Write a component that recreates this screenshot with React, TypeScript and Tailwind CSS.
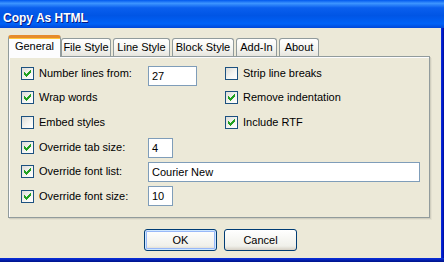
import React from 'react';

const ui = "font-['Liberation_Sans',Arial,sans-serif] text-[11px] text-black";

function Check({ on }: { on: boolean }) {
  return (
    <span className="w-[13px] h-[13px] shrink-0 border border-[#1C5180] bg-[linear-gradient(135deg,#DCDCD7,#F4F4F0_55%,#FFFFFF)] flex items-center justify-center">
      {on && (
        <svg width="7" height="7" viewBox="0 0 7 7" shapeRendering="crispEdges" fill="#21A121">
          <rect x="6" y="0" width="1" height="1" />
          <rect x="5" y="1" width="2" height="1" />
          <rect x="0" y="2" width="1" height="1" />
          <rect x="4" y="2" width="3" height="1" />
          <rect x="0" y="3" width="2" height="1" />
          <rect x="3" y="3" width="3" height="1" />
          <rect x="0" y="4" width="5" height="1" />
          <rect x="1" y="5" width="3" height="1" />
          <rect x="2" y="6" width="1" height="1" />
        </svg>
      )}
    </span>
  );
}

function Option({ on, label, width }: { on: boolean; label: string; width?: string }) {
  return (
    <div className="flex items-start pt-[6px]">
      <Check on={on} />
      <span className={`ml-[5px] leading-[13px] whitespace-nowrap ${width ?? ''}`}>{label}</span>
    </div>
  );
}

function Field({ value, w, mt }: { value: string; w: string; mt: string }) {
  return (
    <div className={`${w} ${mt} h-[20px] border border-[#7F9DB9] bg-white pl-[3px] leading-[18px] whitespace-nowrap`}>
      {value}
    </div>
  );
}

const tabs = [
  { name: 'File Style', w: 'w-[50px]' },
  { name: 'Line Style', w: 'w-[57px]' },
  { name: 'Block Style', w: 'w-[62px]' },
  { name: 'Add-In', w: 'w-[41px]' },
  { name: 'About', w: 'w-[40px]' },
];

export default function App() {
  return (
    <div className={`w-[444px] h-[262px] flex flex-col overflow-hidden ${ui}`}>
      {/* title bar */}
      <div className="h-[28px] shrink-0 bg-[linear-gradient(to_bottom,#0058EE_0%,#3D95FF_12%,#0A5FEE_28%,#0055E5_55%,#0062F7_85%,#0047D8_100%)] pl-[3px] pt-[10px]">
        <span className="text-white font-bold text-[12px] leading-[14px] [text-shadow:1px_1px_0_#0A1883]">Copy As HTML</span>
      </div>

      <div className="flex flex-1">
        <div className="flex-1 bg-[#ECE9D8] flex flex-col pt-[7px]">
          {/* tab strip */}
          <div className="flex items-end h-[21px] ml-[8px] gap-[2px]">
            <div className="relative z-10 w-[53px] h-[22px] -mb-[1px] -mr-[2px] rounded-t-[3px] border-x border-[#919B9C] border-t-[3px] border-t-[#E68B2C] bg-[#FCFCFE] shadow-[inset_0_1px_0_#FFC73C] text-center pt-[2px] leading-[13px]">
              General
            </div>
            {tabs.map(t => (
              <div
                key={t.name}
                className={`${t.w} h-[18px] rounded-t-[3px] border-x border-t border-[#919B9C] bg-[linear-gradient(to_bottom,#FFFFFF,#F4F4F0_60%,#E6E5DE)] text-center pt-[2px] leading-[13px] whitespace-nowrap`}
              >
                {t.name}
              </div>
            ))}
          </div>

          {/* panel */}
          <div className="ml-[8px] w-[422px] h-[162px] border border-[#919B9C] shadow-[1px_1px_0_#D0CEBF,2px_2px_0_#E3E0D0,inset_1px_1px_0_#FCFCFE] pl-[12px] pt-[4px] flex flex-col">
            <div className="h-[24px] flex">
              <div className="w-[204px] flex items-start">
                <Option on label="Number lines from:" width="w-[109px]" />
                <Field value="27" w="w-[49px]" mt="mt-[5px]" />
              </div>
              <Option on={false} label="Strip line breaks" />
            </div>
            <div className="h-[25px] flex">
              <div className="w-[204px]">
                <Option on label="Wrap words" />
              </div>
              <Option on label="Remove indentation" />
            </div>
            <div className="h-[25px] flex">
              <div className="w-[204px]">
                <Option on={false} label="Embed styles" />
              </div>
              <Option on label="Include RTF" />
            </div>
            <div className="h-[24px] flex items-start">
              <Option on label="Override tab size:" width="w-[109px]" />
              <Field value="4" w="w-[25px]" mt="mt-[3px]" />
            </div>
            <div className="h-[25px] flex items-start">
              <Option on label="Override font list:" width="w-[109px]" />
              <Field value="Courier New" w="w-[272px]" mt="mt-[3px]" />
            </div>
            <div className="h-[25px] flex items-start">
              <Option on label="Override font size:" width="w-[109px]" />
              <Field value="10" w="w-[25px]" mt="mt-[2px]" />
            </div>
          </div>

          {/* buttons */}
          <div className="mt-[11px] flex justify-center gap-[7px]">
            <button className="w-[73px] h-[22px] rounded-[3px] border border-[#003C74] bg-[linear-gradient(to_bottom,#FFFFFF,#F0F0EA_80%,#D6D0C5)] shadow-[inset_0_0_0_1px_#CEE7FF,inset_0_0_0_2px_#98B8F8] leading-[13px]">
              OK
            </button>
            <button className="w-[73px] h-[22px] rounded-[3px] border border-[#003C74] bg-[linear-gradient(to_bottom,#FFFFFF,#F0F0EA_80%,#D6D0C5)] leading-[13px]">
              Cancel
            </button>
          </div>
        </div>
        <div className="w-[3px] bg-[linear-gradient(to_right,#0831D9,#0019CF,#001090)]" />
      </div>
      <div className="h-[4px] shrink-0 bg-[linear-gradient(to_bottom,#0831D9,#0725C9,#001B9F,#00138C)]" />
    </div>
  );
}
